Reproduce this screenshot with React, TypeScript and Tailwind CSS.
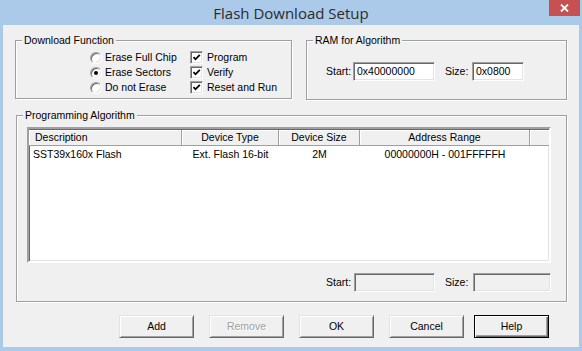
import type { ReactNode } from 'react'

function Radio({ checked }: { checked?: boolean }) {
  return (
    <span className="w-[12px] h-[12px] shrink-0 rounded-full bg-white border border-t-[#a0a0a0] border-l-[#a0a0a0] border-b-white border-r-white shadow-[inset_1px_1px_0_#696969,inset_-1px_-1px_0_#e3e3e3] flex items-center justify-center">
      {checked && <span className="w-[4px] h-[4px] rounded-full bg-black" />}
    </span>
  )
}

function Check() {
  return (
    <span className="w-[13px] h-[13px] shrink-0 bg-white border border-t-[#a0a0a0] border-l-[#a0a0a0] border-b-white border-r-white shadow-[inset_1px_1px_0_#696969,inset_-1px_-1px_0_#e3e3e3] flex items-center justify-center">
      <svg width="9" height="9" viewBox="0 0 9 9">
        <path d="M1.5 4.2 L3.5 6.3 L7.8 1.8" fill="none" stroke="#000" strokeWidth="1.8" />
      </svg>
    </span>
  )
}

function Field({ value, w, disabled }: { value?: string; w: string; disabled?: boolean }) {
  return (
    <div
      className={`${w} h-[19px] border border-t-[#a0a0a0] border-l-[#a0a0a0] border-b-white border-r-white shadow-[inset_1px_1px_0_#696969,inset_-1px_-1px_0_#e3e3e3] flex items-center pl-[3px] ${
        disabled ? 'bg-[#f0f0f0]' : 'bg-white'
      }`}
    >
      {value}
    </div>
  )
}

function Group({ title, className, children }: { title: string; className: string; children: ReactNode }) {
  return (
    <fieldset className={`border border-[#a0a0a0] shadow-[inset_1px_1px_0_#fff,1px_1px_0_#fff] ${className}`}>
      <legend className="ml-[6px] px-[2px] leading-[14px] bg-[#f0f0f0]">{title}</legend>
      {children}
    </fieldset>
  )
}

function Button({ label, disabled, isDefault }: { label: string; disabled?: boolean; isDefault?: boolean }) {
  return (
    <div
      className={`w-[75px] h-[23px] shrink-0 bg-[#f0f0f0] flex items-center justify-center ${
        isDefault
          ? 'border border-black shadow-[inset_1px_1px_0_#fff,inset_-1px_-1px_0_#696969,inset_-2px_-2px_0_#a0a0a0]'
          : 'border border-t-[#e3e3e3] border-l-[#e3e3e3] border-b-[#696969] border-r-[#696969] shadow-[inset_1px_1px_0_#fff,inset_-1px_-1px_0_#a0a0a0]'
      } ${disabled ? 'text-[#a0a0a0] [text-shadow:1px_1px_0_#fff]' : 'text-black'}`}
    >
      {label}
    </div>
  )
}

const columns = [
  { name: 'Description', w: 'w-[153px]', left: true },
  { name: 'Device Type', w: 'w-[97px]' },
  { name: 'Device Size', w: 'w-[81px]' },
  { name: 'Address Range', w: 'w-[170px]' },
]

const row = ['SST39x160x Flash', 'Ext. Flash 16-bit', '2M', '00000000H - 001FFFFFH']

export default function App() {
  return (
    <div className="w-[582px] h-[351px] bg-[#abcaea] flex flex-col overflow-hidden font-['Liberation_Sans',Arial,sans-serif] text-[10.5px] text-black leading-none">
      {/* title bar */}
      <div className="relative h-[25px] shrink-0 flex items-center justify-center">
        <span className="font-['Open_Sans',sans-serif] text-[15px] text-[#2b2b2b] pt-[1px]">Flash Download Setup</span>
        <div className="absolute right-[2px] top-0 w-[31px] h-[16px] bg-[#c75050] flex items-center justify-center">
          <svg width="9" height="8" viewBox="0 0 9 8">
            <path d="M1 0.5 L8 7.5 M8 0.5 L1 7.5" stroke="#fff" strokeWidth="1.8" />
          </svg>
        </div>
      </div>

      {/* dialog body */}
      <div className="mx-[3px] h-[322px] shrink-0 bg-[#f0f0f0] px-[12px] pt-[8px]">
        <div className="flex gap-[14px]">
          <Group title="Download Function" className="w-[277px] h-[66px]">
            <div className="flex pl-[74px] pt-[3px]">
              <div className="w-[100px] flex flex-col">
                <div className="h-[15px] flex items-center">
                  <Radio />
                  <span className="ml-[3px]">Erase Full Chip</span>
                </div>
                <div className="h-[15px] flex items-center">
                  <Radio checked />
                  <span className="ml-[3px]">Erase Sectors</span>
                </div>
                <div className="h-[15px] flex items-center">
                  <Radio />
                  <span className="ml-[3px]">Do not Erase</span>
                </div>
              </div>
              <div className="flex flex-col">
                <div className="h-[15px] flex items-center">
                  <Check />
                  <span className="ml-[4px]">Program</span>
                </div>
                <div className="h-[15px] flex items-center">
                  <Check />
                  <span className="ml-[4px]">Verify</span>
                </div>
                <div className="h-[15px] flex items-center">
                  <Check />
                  <span className="ml-[4px]">Reset and Run</span>
                </div>
              </div>
            </div>
          </Group>

          <Group title="RAM for Algorithm" className="w-[261px] h-[67px]">
            <div className="flex items-center pl-[19px] mt-[15px]">
              <span className="w-[27px]">Start:</span>
              <Field value="0x40000000" w="w-[82px]" />
              <span className="w-[27px] ml-[10px]">Size:</span>
              <Field value="0x0800" w="w-[52px]" />
            </div>
          </Group>
        </div>

        <Group title="Programming Algorithm" className="mt-[8px] ml-[1px] w-[551px] h-[194px]">
          <div className="ml-[10px] mt-[5px] w-[524px] h-[136px] bg-white border-2 border-t-[#a0a0a0] border-l-[#a0a0a0] border-b-white border-r-white shadow-[inset_1px_1px_0_#696969,inset_-1px_-1px_0_#e3e3e3] flex flex-col">
            <div className="flex h-[17px] shrink-0 bg-[#f0f0f0] border-t border-[#696969]">
              {columns.map((c) => (
                <div
                  key={c.name}
                  className={`${c.w} h-full flex items-center border-r border-b border-[#a0a0a0] shadow-[inset_1px_1px_0_#fff] ${
                    c.left ? 'pl-[6px]' : 'justify-center'
                  }`}
                >
                  {c.name}
                </div>
              ))}
              <div className="flex-1 h-full border-b border-[#a0a0a0] shadow-[inset_1px_1px_0_#fff]" />
            </div>
            <div className="flex h-[17px] items-center">
              {row.map((v, i) => (
                <div
                  key={v}
                  className={`${columns[i].w} ${columns[i].left ? 'pl-[4px]' : 'text-center'}`}
                >
                  {v}
                </div>
              ))}
            </div>
          </div>

          <div className="flex items-center ml-[309px] mt-[10px]">
            <span className="w-[28px]">Start:</span>
            <Field w="w-[81px]" disabled />
            <span className="w-[28px] ml-[10px]">Size:</span>
            <Field w="w-[78px]" disabled />
          </div>
        </Group>

        <div className="flex mt-[13px] ml-[104px]">
          <Button label="Add" />
          <div className="ml-[15px]">
            <Button label="Remove" disabled />
          </div>
          <div className="ml-[15px]">
            <Button label="OK" />
          </div>
          <div className="ml-[15px]">
            <Button label="Cancel" />
          </div>
          <div className="ml-[10px]">
            <Button label="Help" isDefault />
          </div>
        </div>
      </div>
    </div>
  )
}
